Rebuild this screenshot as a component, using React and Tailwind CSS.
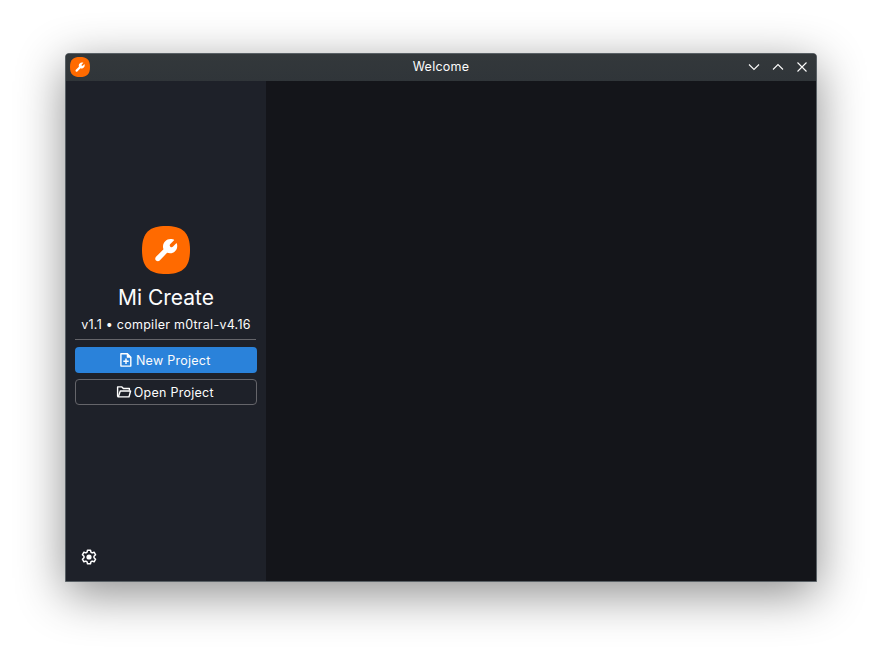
function AppLogo({ className }) {
  return (
    <svg viewBox="0 0 48 48" className={className}>
      <path fill="#ff6a00" d="M24 0C40 0 48 6 48 24S40 48 24 48 0 42 0 24 8 0 24 0Z" />
      <path
        fill="#fff"
        d="M28.4 13C30.1 13 31.6 13.3 32.3 13.9L28.1 18.2C27.5 19 27.6 20 28.3 20.7C29 21.4 30 21.5 30.8 20.8L34.5 17C35.1 18 35.3 19 35.2 20.4C35 24.3 32 27.2 28.1 27.3C26.9 27.3 26 27.1 25.1 26.8L17.7 34.5C16.7 35.5 15.1 35.5 14 34.5C13 33.5 12.9 31.9 14 30.8L21.5 23.3C21.1 22.4 20.9 21.5 21 20.2C21.2 16.2 24.4 13.1 28.4 13Z"
      />
    </svg>
  );
}

function NewFileIcon() {
  return (
    <svg viewBox="0 0 16 16" className="size-4" fill="none" stroke="#fff" strokeWidth="1.4">
      <path d="M2.9 1.7h6.5l3.4 3.5v8.9H2.9z" strokeLinejoin="round" />
      <path d="M9 1.5v4h4z" fill="#fff" strokeWidth=".5" />
      <path d="M8 6.5v5.4M5.3 9.2h5.4" />
    </svg>
  );
}

function FolderIcon() {
  return (
    <svg viewBox="0 0 16 16" className="size-4" fill="none" stroke="#fff" strokeWidth="1.4" strokeLinejoin="round">
      <path d="M2.3 12.9 1.6 12V2.9h4.3l1.5 1.6h6v2" />
      <path d="M2.3 12.9 4.3 7h10.3L13 12.9z" />
    </svg>
  );
}

function GearIcon() {
  return (
    <svg viewBox="0 0 16 16" className="size-4" fill="none" stroke="#fff" strokeWidth="1.5" strokeLinejoin="round">
      <path d="M6.5 1.2h3l.4 2 1.2.7 2-.7 1.5 2.6-1.6 1.4v1.6l1.6 1.4-1.5 2.6-2-.7-1.2.7-.4 2h-3l-.4-2-1.2-.7-2 .7-1.5-2.6L3 8.8V7.2L1.4 5.8l1.5-2.6 2 .7 1.2-.7z" />
      <circle cx="8" cy="8" r="2.6" fill="#fff" stroke="none" />
    </svg>
  );
}

function WindowControls() {
  const paths = ["m3 5.5 5 5 5-5", "m3 10.5 5-5 5 5", "m3.5 3.5 9 9m0-9-9 9"];
  return (
    <div className="flex gap-2">
      {paths.map((d) => (
        <svg key={d} viewBox="0 0 16 16" className="size-4" fill="none" stroke="#fcfcfc" strokeWidth="1.1">
          <path d={d} />
        </svg>
      ))}
    </div>
  );
}

export default function App() {
  return (
    <div className="h-[659px] w-[882px] overflow-hidden bg-white pt-[53px] pl-[65px] font-['Inter',sans-serif] text-[12.5px] tracking-[0.26px] text-[#fcfcfc]">
      <div className="flex h-[529px] w-[752px] flex-col overflow-hidden rounded-t-[4px] border border-[#596065] bg-[#14151a] shadow-[0_12px_48px_rgba(0,0,0,0.45)]">
        <header className="grid h-[27px] shrink-0 grid-cols-[1fr_auto_1fr] items-center bg-linear-to-b from-[#33383b] to-[#303539] pr-[6px] pb-[2px] pl-1">
          <AppLogo className="size-5" />
          <h1 className="pt-px pl-[2px] leading-4">Welcome</h1>
          <div className="justify-self-end">
            <WindowControls />
          </div>
        </header>
        <div className="flex flex-1">
          <aside className="flex w-[200px] flex-col bg-[#1e2129] pt-[145px] pr-[9px] pb-4 pl-[9px]">
            <AppLogo className="size-12 self-center" />
            <h2 className="mt-[10px] text-center text-[21px] leading-7 tracking-normal">Mi Create</h2>
            <p className="mt-[5px] text-center leading-4 whitespace-nowrap">v1.1 • compiler m0tral-v4.16</p>
            <hr className="mt-[6px] mr-px border-[#65656a]" />
            <button className="mt-[7px] flex h-[26px] w-full shrink-0 items-center justify-center gap-[2px] rounded-[4px] bg-[#2a82da] pr-[3.5px]">
              <NewFileIcon />
              <span className="pt-[2px] leading-4">New Project</span>
            </button>
            <button className="mt-[6px] flex h-[26px] w-full shrink-0 items-center justify-center gap-[1.5px] rounded-[4px] border border-[#65656a] pr-[2px]">
              <FolderIcon />
              <span className="pt-[2px] leading-4">Open Project</span>
            </button>
            <button className="mt-auto ml-[6px] w-4">
              <GearIcon />
            </button>
          </aside>
          <main className="flex-1" />
        </div>
      </div>
    </div>
  );
}
